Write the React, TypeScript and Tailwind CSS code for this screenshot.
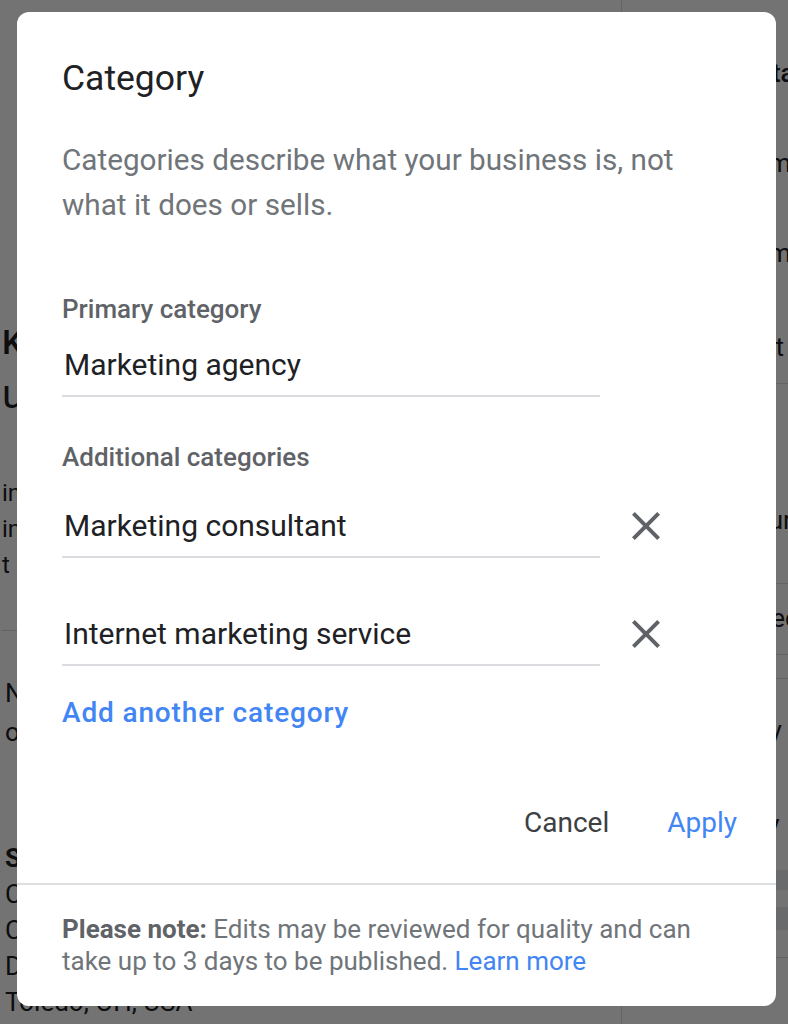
function CloseIcon() {
  return (
    <svg viewBox="0 0 24 24" className="h-12 w-12 shrink-0" fill="#5f6368">
      <path d="M19 6.41L17.59 5 12 10.59 6.41 5 5 6.41 10.59 12 5 17.59 6.41 19 12 13.41 17.59 19 19 17.59 13.41 12z" />
    </svg>
  );
}

function CategoryField({ value, removable }: { value: string; removable?: boolean }) {
  return (
    <div className="flex items-start">
      <div className="w-[538px] border-b-2 border-[#dadce0] pb-[12px] pl-[2px] text-[30px] leading-[36px] text-[#202124]">
        {value}
      </div>
      {removable && (
        <button className="ml-[22px] flex h-[36px] items-center">
          <CloseIcon />
        </button>
      )}
    </div>
  );
}

function BackgroundPage() {
  return (
    <div className="flex h-full whitespace-nowrap text-[#202124]">
      <div className="w-[622px] shrink-0 overflow-hidden border-r border-[#dadce0] pl-[2px]">
        <div className="mt-[322px] text-[34px] font-medium leading-[40px]">Kelly Digital Marketing</div>
        <div className="mt-[9px] text-[40px] leading-[48px]">ur Business Profile</div>
        <div className="mt-[56px] text-[24px] leading-[36px]">
          <div>in 2021 and has grown</div>
          <div>in the Toledo area</div>
          <div>t reviews from customers</div>
        </div>
        <div className="mt-[47px] h-px bg-[#dadce0]" />
        <div className="mt-[43px] pl-[3px] text-[26px] leading-[39px]">
          <div>No hours added</div>
          <div>or special hours</div>
        </div>
        <div className="mt-[88px] pl-[3px] text-[26px] leading-[36px]">
          <div className="font-bold">Service area</div>
          <div>Columbus, OH, USA</div>
          <div>Cleveland, OH, USA</div>
          <div>Dayton, OH, USA</div>
          <div>Toledo, OH, USA</div>
        </div>
      </div>
      <div className="min-w-0 flex-1 overflow-hidden pl-[24px] text-[26px] leading-[30px]">
        <div className="mt-[58px] font-medium">Business status</div>
        <div className="mt-[60px]">Open with main hours</div>
        <div className="mt-[60px]">Open with main hours</div>
        <div className="mt-[64px]">Learn about areas</div>
        <div className="-ml-[24px] mt-[21px] h-px bg-[#dadce0]" />
        <div className="mt-[121px]">Today's hours</div>
        <div className="-ml-[24px] mt-[48px] h-px bg-[#dadce0]" />
        <div className="mt-[19px]">Year founded</div>
        <div className="-ml-[24px] mt-[21px] h-px bg-[#dadce0]" />
        <div className="-ml-[24px] mt-[23px] h-px bg-[#dadce0]" />
        <div className="mt-[36px]">https://kelly</div>
        <div className="mt-[24px]">Tuesday</div>
        <div className="mt-[10px]">Wednesday</div>
        <div className="-ml-[24px] mt-[31px] h-[20px] bg-[#e8eaed]" />
        <div className="-ml-[24px] mt-[17px] h-[23px] bg-[#e8eaed]" />
        <div className="-ml-[24px] mt-[27px] h-px bg-[#dadce0]" />
      </div>
    </div>
  );
}

export default function App() {
  return (
    <div className="relative h-[1024px] w-full overflow-hidden bg-white font-[Roboto,sans-serif]">
      <BackgroundPage />
      <div className="absolute inset-0 bg-black/55" />
      <div className="absolute left-[17px] top-[12px] flex h-[994px] w-[759px] flex-col rounded-[12px] bg-white">
        <div className="px-[45px] pt-[44px]">
          <h2 className="text-[35.5px] leading-[44px] text-[#202124]">Category</h2>
          <p className="mt-[37px] text-[29.7px] leading-[45px] text-[#70757a]">
            Categories describe what your business is, not
            <br />
            what it does or sells.
          </p>

          <div className="mt-[66px] text-[26px] font-medium leading-[32px] text-[#5f6368]">Primary category</div>
          <div className="mt-[22px]">
            <CategoryField value="Marketing agency" />
          </div>

          <div className="mt-[44px] text-[26px] font-medium leading-[32px] text-[#5f6368]">Additional categories</div>
          <div className="mt-[35px]">
            <CategoryField value="Marketing consultant" removable />
          </div>
          <div className="mt-[58px]">
            <CategoryField value="Internet marketing service" removable />
          </div>

          <button className="mt-[30px] text-[28px] font-medium leading-[34px] tracking-[0.85px] text-[#4285f4]">
            Add another category
          </button>
        </div>

        <div className="mt-[76px] flex justify-end gap-[58px] pr-[39px] text-[28px] leading-[34px]">
          <button className="text-[#3c4043]">Cancel</button>
          <button className="text-[#4285f4]">Apply</button>
        </div>

        <div className="mt-[43px] h-[2px] bg-[#e0e0e0]" />

        <p className="mt-[28px] px-[45px] text-[26px] leading-[32px] text-[#70757a]">
          <span className="font-bold text-[#5f6368]">Please note:</span> Edits may be reviewed for quality and can
          <br />
          take up to 3 days to be published. <span className="text-[#4285f4]">Learn more</span>
        </p>
      </div>
    </div>
  );
}
